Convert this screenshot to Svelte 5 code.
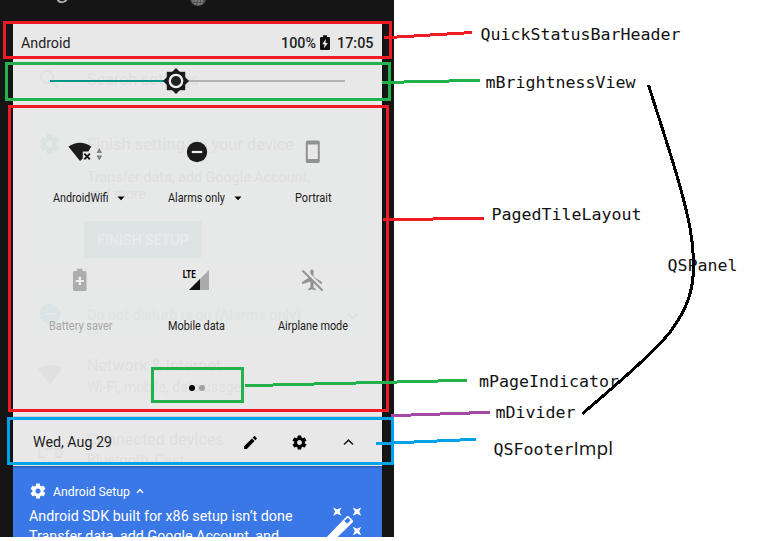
<script>
  const tiles = [
    { icon: 'wifi', label: 'AndroidWifi', w: 55.5, menu: true },
    { icon: 'dnd', label: 'Alarms only', w: 57, menu: true },
    { icon: 'portrait', label: 'Portrait', w: 36.5 },
    { icon: 'battery', label: 'Battery saver', w: 63.5, off: true },
    { icon: 'signal', label: 'Mobile data', w: 57 },
    { icon: 'airplane', label: 'Airplane mode', w: 70 }
  ];

  const labels = [
    { t: 'QuickStatusBarHeader', x: 480.5, y: 40, w: 200 },
    { t: 'mBrightnessView', x: 485.5, y: 88, w: 150 },
    { t: 'PagedTileLayout', x: 491.5, y: 220, w: 150 },
    { t: 'QSPanel', x: 667.5, y: 271, w: 70 },
    { t: 'mPageIndicator', x: 479, y: 387, w: 140 },
    { t: 'mDivider', x: 495.5, y: 418, w: 80 },
    { t: 'QSFooter', x: 493.5, y: 455, w: 80 }
  ];

  const ghosts = [
    { t: 'Search settings', x: 87, y: 84.5, w: 112, s: 16 },
    { t: 'Finish setting up your device', x: 87, y: 149.5, w: 207, s: 16.5 },
    { t: 'Transfer data, add Google Account,', x: 87, y: 182, w: 223, s: 14 },
    { t: 'and more', x: 87, y: 198.5, w: 59, s: 14 },
    { t: 'Do not disturb is on (Alarms only)', x: 87, y: 319.5, w: 214, s: 14.5, c: '#dde5e4', b: 500 },
    { t: 'Network & Internet', x: 87, y: 371, w: 134, s: 16.5 },
    { t: 'Wi-Fi, mobile, data usage', x: 87, y: 391.5, w: 154, s: 14.5 },
    { t: 'Connected devices', x: 87, y: 444.5, w: 137, s: 16.5 },
    { t: 'Bluetooth, Cast', x: 87, y: 465, w: 97, s: 14.5 }
  ];

  const gear = 'M19.43 12.98c.04-.32.07-.64.07-.98s-.03-.66-.07-.98l2.11-1.65c.19-.15.24-.42.12-.64l-2-3.46c-.12-.22-.39-.3-.61-.22l-2.49 1c-.52-.4-1.08-.73-1.69-.98l-.38-2.65C14.46 2.18 14.25 2 14 2h-4c-.25 0-.46.18-.49.42l-.38 2.65c-.61.25-1.17.59-1.69.98l-2.49-1c-.23-.09-.49 0-.61.22l-2 3.46c-.13.22-.07.49.12.64l2.11 1.65c-.04.32-.07.65-.07.98s.03.66.07.98l-2.11 1.65c-.19.15-.24.42-.12.64l2 3.46c.12.22.39.3.61.22l2.49-1c.52.4 1.08.73 1.69.98l.38 2.65c.03.24.24.42.49.42h4c.25 0 .46-.18.49-.42l.38-2.65c.61-.25 1.17-.59 1.69-.98l2.49 1c.23.09.49 0 .61-.22l2-3.46c.12-.22.07-.49-.12-.64l-2.11-1.65zM12 15.5c-1.93 0-3.5-1.57-3.5-3.5s1.57-3.5 3.5-3.5 3.5 1.57 3.5 3.5-1.57 3.5-3.5 3.5z';
</script>

{#snippet fit(t, w, size, weight = 400)}
  <svg class="fit" width={w} height="20"><text x="0" y="15" textLength={w} lengthAdjust="spacingAndGlyphs" font-size={size} font-weight={weight}>{t}</text></svg>
{/snippet}

<main>
  <section class="phone">
    <div class="topbar">
      <svg width="394" height="24">
        <path d="M57.5 0C60 3 65 3 67 -1" fill="none" stroke="#aaa" stroke-width="2" />
        <circle cx="198" cy="-2" r="8" fill="#555" />
        <path d="M192 1h12M194 4h9M195 0v4M199 0v5M202 0v4" stroke="#999" stroke-width=".7" stroke-dasharray="2 1" />
      </svg>
    </div>

    <div class="panel">
      <svg class="ghost" width="369" height="442" viewBox="13 24 369 442">
        <path d="M21 115h353v152H21zM21 287h353v51H21z" fill="#e7e8e8" />
        <g fill="none" stroke="#dbe3e2" stroke-width="2"><circle cx="47" cy="77" r="6" /><path d="M51.5 81.500l6 6" /></g>
        <path transform="translate(37.500 132) scale(1)" d={gear} fill="#dae3e3" />
        <rect x="84" y="221" width="118" height="37" rx="2" fill="#dee4e4" />
        <text x="97" y="245" font-size="14.500" font-weight="500" textLength="91.500" lengthAdjust="spacingAndGlyphs" fill="#e9eaea">FINISH SETUP</text>
        <circle cx="50" cy="314" r="10.300" fill="#dbe4e4" /><path d="M45 314h10" stroke="#e8e8e8" stroke-width="2" />
        <path d="M348 313.500l5 5 5-5" fill="none" stroke="#dedede" stroke-width="1.500" />
        <path d="M38 369Q50 361 62 369L50 384.500z" fill="#e0e0e0" />
        <path d="M39 447v10h6m0-8h15v-3M57 449h4v8h-5z" fill="none" stroke="#e0e0e0" stroke-width="2" />
        {#each ghosts as g}
          <text x={g.x} y={g.y} font-size={g.s} font-weight={g.b ?? 400} textLength={g.w} lengthAdjust="spacingAndGlyphs" fill={g.c ?? '#dfdfdf'}>{g.t}</text>
        {/each}
      </svg>

      <header>
        <span class="carrier">{@render fit('Android', 49.5, 15)}</span>
        {@render fit('100%', 35, 14.8, 500)}
        <svg class="charge" width="10" height="16" viewBox="0 0 10 16"><path d="M1 2h2V.300h4V2h2q1 0 1 1v11q0 1-1 1H1q-1 0-1-1V3q0-1 1-1z" fill="#111" /><path d="M6 4L2.200 9.300H4.500L4 13.300 7.900 8H5.500z" fill="#eee" /></svg>
        {@render fit('17:05', 36.5, 15, 500)}
      </header>

      <div class="brightness">
        <div class="track"><div class="done"></div></div>
        <svg class="thumb" width="28" height="28" viewBox="-14 -14 28 28">
          <g fill="#1b1b1b"><rect x="-9.200" y="-9.200" width="18.400" height="18.400" /><rect x="-9.200" y="-9.200" width="18.400" height="18.400" transform="rotate(45)" /></g>
          <circle r="6.200" fill="#222" stroke="#f2f2f2" stroke-width="2.300" />
        </svg>
      </div>

      <div class="tiles">
        {#each tiles as tile}
          <div class="tile" class:off={tile.off}>
            <svg class="icon" width="44" height="30" viewBox="-22 -15 44 30">
              {#if tile.icon === 'wifi'}
                <path d="M-11.600-5.500Q-6-9.300 0-9.300T11.300-5.500L8.300-.500H2.800V6.500L0 8.900Z" fill="#1b1b1b" />
                <path d="M4.300 1.600l5.600 5.800M9.900 1.600l-5.600 5.800" stroke="#1b1b1b" stroke-width="2" />
                <path d="M16.500 1l2.800-5 2.800 5zM16.500 3.500l2.800 5 2.800-5z" fill="#808080" />
              {:else if tile.icon === 'dnd'}
                <circle cx="0" cy="0" r="10.200" fill="#1b1b1b" /><path d="M-5.200 0H5.200" stroke="#eee" stroke-width="2.200" />
              {:else if tile.icon === 'portrait'}
                <rect x="-7.200" y="-11.500" width="14" height="22.500" rx="1.800" fill="#929292" /><rect x="-5.200" y="-7.500" width="10" height="14.500" fill="#e8e8e8" />
              {:else if tile.icon === 'battery'}
                <path d="M-5.500-9H-3V-11.200H2.500V-9H5q1.500 0 1.500 1.500V9.500Q6.500 11 5 11H-5.500Q-7 11-7 9.500V-7.500Q-7-9-5.500-9z" fill="#adadad" /><path d="M-4.300 1H3.900M-.200-3.200V5" stroke="#eee" stroke-width="2.200" />
              {:else if tile.icon === 'signal'}
                <path d="M-8 10L12-10V10z" fill="#aaa" /><path d="M-8 10L3-1V10z" fill="#111" />
                <path d="M-15-11H-1V0H-15z" fill="#e7e7e7" />
                <text x="-14.300" y="-2.300" font-size="11.500" font-weight="700" textLength="13" lengthAdjust="spacingAndGlyphs">LTE</text>
              {:else}
                <path transform="translate(-13 -12.500) scale(1.040)" d="M21 16v-2l-8-5V3.500c0-.830-.670-1.500-1.500-1.500S10 2.670 10 3.500V9l-8 5v2l8-2.500V19l-2 1.500V22l3.500-1 3.500 1v-1.500L13 19v-5.500l8 2.500z" fill="#929292" />
                <path d="M-9-10.500L10.500 9" stroke="#e8e8e8" stroke-width="3" /><path d="M-10.500-9.500L9.500 10.500" stroke="#929292" stroke-width="1.900" />
              {/if}
            </svg>
            <div class="name">
              {@render fit(tile.label, tile.w, 12.3)}
              {#if tile.menu}<svg class="caret" width="8" height="5"><path d="M.500 .500h7L4 4.300z" /></svg>{/if}
            </div>
          </div>
        {/each}
      </div>

      <div class="dots"><i></i><i></i></div>

      <footer>
        <span class="date">{@render fit('Wed, Aug 29', 79, 15)}</span>
        <svg width="17" height="17" viewBox="0 0 24 24"><path d="M3 17.250V21h3.750L17.810 9.940l-3.750-3.750L3 17.250zM20.710 7.040c.390-.390.390-1.020 0-1.410l-2.340-2.340c-.390-.390-1.020-.390-1.410 0l-1.830 1.830 3.750 3.750 1.830-1.830z" /></svg>
        <svg width="17" height="17" viewBox="0 0 24 24"><path d={gear} /></svg>
        <svg width="17" height="17" viewBox="0 0 17 17"><path d="M4 10.500l4.500-4.300 4.500 4.300" fill="none" stroke="#222" stroke-width="1.600" /></svg>
      </footer>
    </div>

    <div class="notice">
      <div class="copy">
        <div class="app">
          <svg width="18" height="18" viewBox="0 0 24 24"><path d={gear} fill="#fff" /></svg>
          {@render fit('Android Setup', 77, 12.5)}
          <svg width="8" height="6"><path d="M1 5l3-3.500L7 5" fill="none" stroke="#fff" stroke-width="1.200" /></svg>
        </div>
        {@render fit('Android SDK built for x86 setup isn’t done', 263.5, 15)}
        {@render fit('Transfer data, add Google Account, and', 250, 15)}
      </div>
      <svg class="wand" width="44" height="36" viewBox="324 505 44 36">
        <path d="M323 541L346.500 516.500q1.200-1.200 2.400 0l3.600 3.600q1.200 1.200 0 2.400L333.500 541z" fill="#fff" />
        <path d="M344.300 520.800l3.700-3 2.500 2.500-3.300 3.500z" fill="#3b78e7" />
        <g fill="#fff">
          {#each [[337.3, 511.6], [357, 511.6], [357, 531]] as [x, y]}
            <path transform="translate({x} {y})" d="M-4.200-4.200L0-2.200 4.200-4.200 2.200 0 4.200 4.200 0 2.200-4.200 4.200-2.200 0z" />
          {/each}
        </g>
      </svg>
    </div>
  </section>

  <svg class="notes" width="777" height="541">
    <g font-family="'DejaVu Sans Mono', monospace" font-size="16" fill="#111">
      {#each labels as l}
        <text x={l.x} y={l.y} textLength={l.w} lengthAdjust="spacingAndGlyphs">{l.t}</text>
      {/each}
    </g>
    <text x="573.500" y="455" font-family="'Open Sans', sans-serif" font-size="18" fill="#111" textLength="39.500" lengthAdjust="spacingAndGlyphs">Impl</text>
    <g fill="none" stroke-width="3" shape-rendering="crispEdges">
      <g stroke="#ed1c24"><rect x="4.500" y="22.500" width="386" height="35" /><rect x="9.500" y="106.500" width="378" height="304" /><path d="M384 37.800L472 32.500M383 219.500H433M433 218.500H484" /></g>
      <g stroke="#22b14c"><rect x="6.500" y="63.500" width="383" height="36" /><rect x="152.500" y="368.500" width="90" height="33" /><path d="M382 82.500L480 80.300M245 385.700L467 380.300" /></g>
      <path d="M391 415.700L490 412.300" stroke="#a349a4" />
      <g stroke="#00a2e8"><rect x="8.500" y="418.500" width="384" height="45" /><path d="M376 443.700L476 439.300" /></g>
      <path d="M648.500 85C660 122 672 157 681 190C688 216 693.500 238 693.500 266C693.500 290 688 308 669 333.500C652 354 614 387 582.500 413.500" stroke="#000" />
    </g>
  </svg>
</main>

<style>
  :global(body) { margin: 0; background: #fff; }
  main { position: relative; width: 777px; height: 541px; overflow: hidden; font-family: Roboto, sans-serif; }
  svg { display: block; flex: none; }
  .phone { display: flex; flex-direction: column; width: 394px; height: 537px; overflow: hidden; background: #151515; }
  .topbar { height: 24px; }
  .panel { position: relative; z-index: 1; display: flex; flex-direction: column; width: 369px; height: 442px; margin-left: 13px; background: #e8e8e8; box-shadow: 0 1px 2px rgba(0, 0, 0, .35); }
  .ghost { position: absolute; inset: 0; }
  .fit { overflow: visible; }
  .fit text { fill: currentColor; }
  header, .brightness, .tiles, .dots, footer { position: relative; box-sizing: border-box; }
  header { display: flex; align-items: center; height: 36px; padding: 1px 8.500px 0 8px; color: #222; }
  .carrier { margin-right: auto; }
  .charge { margin: 0 7.500px 0 4px; }
  .brightness { height: 42px; padding: 20px 37px 0 36.500px; }
  .track { height: 2px; background: #b2b2b2; }
  .done { width: 126px; height: 2px; background: #009688; }
  .thumb { position: absolute; left: 149px; top: 7px; }
  .tiles { display: grid; grid-template-columns: repeat(3, 116.500px); grid-auto-rows: 128px; height: 275px; padding: 35px 0 0 9px; color: #1b1b1b; }
  .tile { display: flex; flex-direction: column; align-items: center; }
  .icon { overflow: visible; }
  .name { position: relative; margin-top: 20px; }
  .caret { position: absolute; left: calc(100% + 9px); top: 9px; }
  .off { color: #a6a6a6; }
  .dots { display: flex; justify-content: center; gap: 4px; height: 39px; padding: 8px 1px 0 0; }
  .dots i { width: 6px; height: 6px; border-radius: 50%; background: #000; }
  .dots i + i { background: #a0a0a0; }
  footer { display: flex; align-items: center; gap: 32px; height: 50px; padding: 1px 25px 0 20px; border-top: 1px solid #cfcfcf; color: #222; }
  .date { margin-right: auto; }
  .notice { display: flex; width: 369px; height: 71px; margin-left: 13px; box-sizing: border-box; padding: 16px 14px 0 16px; background: #3b78e7; color: #fff; justify-content: space-between; overflow: hidden; }
  .app { display: flex; align-items: center; gap: 6px; height: 18px; margin-bottom: 6px; }
  .wand { margin-top: 23px; }
  .notes { position: absolute; inset: 0; z-index: 2; }
</style>
